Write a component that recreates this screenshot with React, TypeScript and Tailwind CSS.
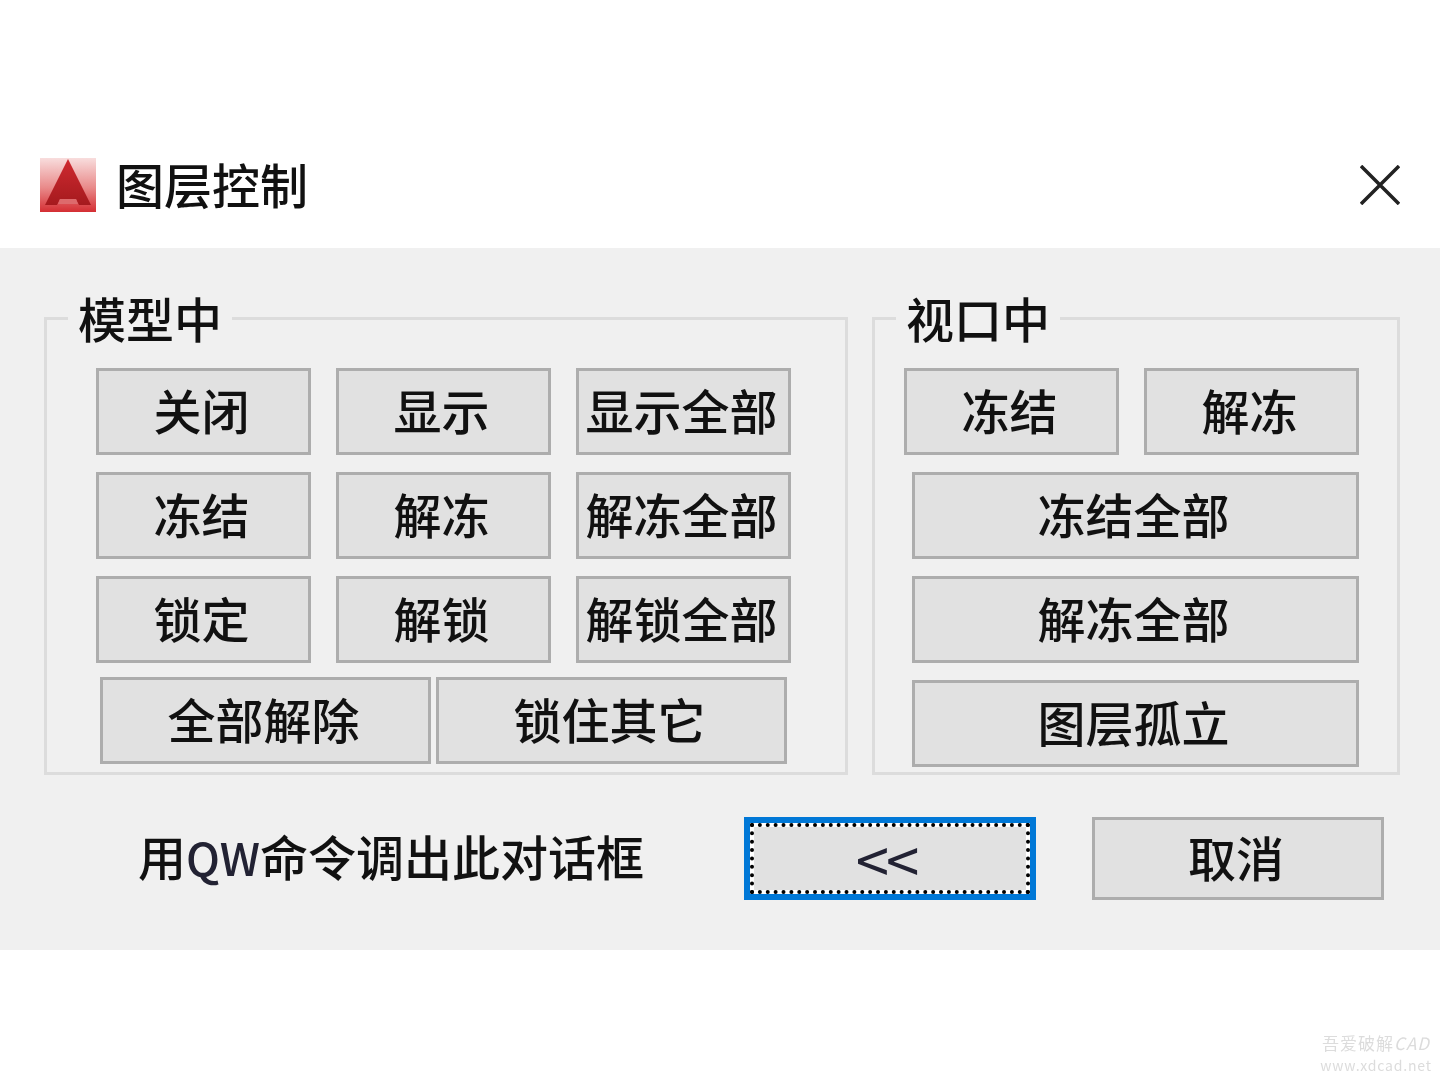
import React from 'react';

const FONT = "font-['Noto_Sans_CJK_SC','Liberation_Sans',sans-serif]";

const Btn: React.FC<{ label: string; height?: string; className?: string }> = ({
  label,
  height = 'h-[87px]',
  className = '',
}) => (
  <button
    className={`flex ${height} items-center justify-center border-[3px] border-[#adadad] bg-[#e1e1e1] pb-[6px] pr-[4px] text-[48px] font-medium leading-none text-[#111] ${className}`}
  >
    {label}
  </button>
);

const AppIcon = () => (
  <svg width="56" height="54" viewBox="0 0 56 54">
    <defs>
      <linearGradient id="bg" x1="0" y1="0" x2="0" y2="1">
        <stop offset="0" stopColor="#f8dddd" />
        <stop offset="0.55" stopColor="#e98a8a" />
        <stop offset="1" stopColor="#d42e33" />
      </linearGradient>
      <linearGradient id="tri" x1="0" y1="0" x2="0" y2="1">
        <stop offset="0" stopColor="#cf2a30" />
        <stop offset="1" stopColor="#a51a1e" />
      </linearGradient>
    </defs>
    <rect width="56" height="54" fill="url(#bg)" />
    <path d="M28 1 L51 47 H39 L36 41 H20 L17 47 H5 Z" fill="url(#tri)" />
    <path d="M20 41 H36 L38 46 H18 Z" fill="#dd6a6c" />
  </svg>
);

export default function App() {
  return (
    <div className={`relative h-[1080px] w-[1440px] overflow-hidden bg-white blur-[0.7px] ${FONT}`}>
      {/* Title bar */}
      <div className="flex h-[248px] items-end justify-between pb-[36px] pl-[40px] pr-[40px]">
        <div className="flex items-center gap-[20px]">
          <AppIcon />
          <span className="h-[54px] text-[48px] font-medium leading-[50px] text-[#111]">图层控制</span>
        </div>
        <svg width="40" height="40" viewBox="0 0 40 40" className="mb-[7px]" stroke="#222" strokeWidth="3.5">
          <path d="M1 1 L39 39 M39 1 L1 39" />
        </svg>
      </div>

      {/* Body */}
      <div className="h-[702px] bg-[#f0f0f0] pl-[44px] pr-[40px] pt-[69px]">
        <div className="flex gap-[24px]">
          {/* 模型中 */}
          <div className="relative h-[458px] w-[804px] border-[3px] border-[#dcdcdc] pl-[49px] pr-[54px] pt-[48px]">
            <span className="absolute left-[21px] top-[-30px] bg-[#f0f0f0] px-[10px] text-[48px] font-medium leading-[54px] text-[#111]">
              模型中
            </span>
            <div className="grid grid-cols-3 gap-x-[25px] gap-y-[17px]">
              {['关闭', '显示', '显示全部', '冻结', '解冻', '解冻全部', '锁定', '解锁', '解锁全部'].map((label) => (
                <Btn key={label} label={label} />
              ))}
            </div>
            <div className="mt-[14px] flex gap-[5px] pl-[4px]">
              <Btn label="全部解除" className="w-[331px]" />
              <Btn label="锁住其它" className="w-[351px]" />
            </div>
          </div>

          {/* 视口中 */}
          <div className="relative h-[458px] w-[528px] border-[3px] border-[#dcdcdc] pl-[29px] pr-[38px] pt-[48px]">
            <span className="absolute left-[21px] top-[-30px] bg-[#f0f0f0] px-[10px] text-[48px] font-medium leading-[54px] text-[#111]">
              视口中
            </span>
            <div className="flex gap-[25px]">
              <Btn label="冻结" className="w-[215px]" />
              <Btn label="解冻" className="w-[215px]" />
            </div>
            <div className="mt-[17px] flex flex-col gap-[17px] pl-[8px]">
              <Btn label="冻结全部" />
              <Btn label="解冻全部" />
              <Btn label="图层孤立" />
            </div>
          </div>
        </div>

        {/* Footer */}
        <div className="mt-[42px] flex items-center pl-[94px]">
          <span className="w-[606px] pb-[6px] text-[48px] font-medium leading-[54px] text-[#111]">
            用<span className="text-[45px] text-[#223]">QW</span>命令调出此对话框
          </span>
          <button className="h-[83px] w-[292px] border-[6px] border-[#0078d7]">
            <span className="block h-full w-full border-[4px] border-dotted border-black bg-white">
              <span className="flex h-full w-full items-center justify-center bg-[#e1e1e1] pb-[2px] pr-[8px] text-[60px] leading-none tracking-[-3px] text-[#223]">
                &lt;&lt;
              </span>
            </span>
          </button>
          <Btn label="取消" height="h-[83px]" className="ml-[56px] w-[292px]" />
        </div>
      </div>

      {/* Watermark */}
      <div className="absolute bottom-[7px] right-[8px] w-[112px] text-center text-[#dcdcdc]">
        <div className="mb-[5px] flex h-[20px] items-center justify-center whitespace-nowrap text-[17px] leading-none tracking-[1px]">
          吾爱破解<span className="italic">CAD</span>
        </div>
        <div className="h-[16px] whitespace-nowrap text-[14px] leading-[16px] tracking-[0.8px]">www.xdcad.net</div>
      </div>
    </div>
  );
}
